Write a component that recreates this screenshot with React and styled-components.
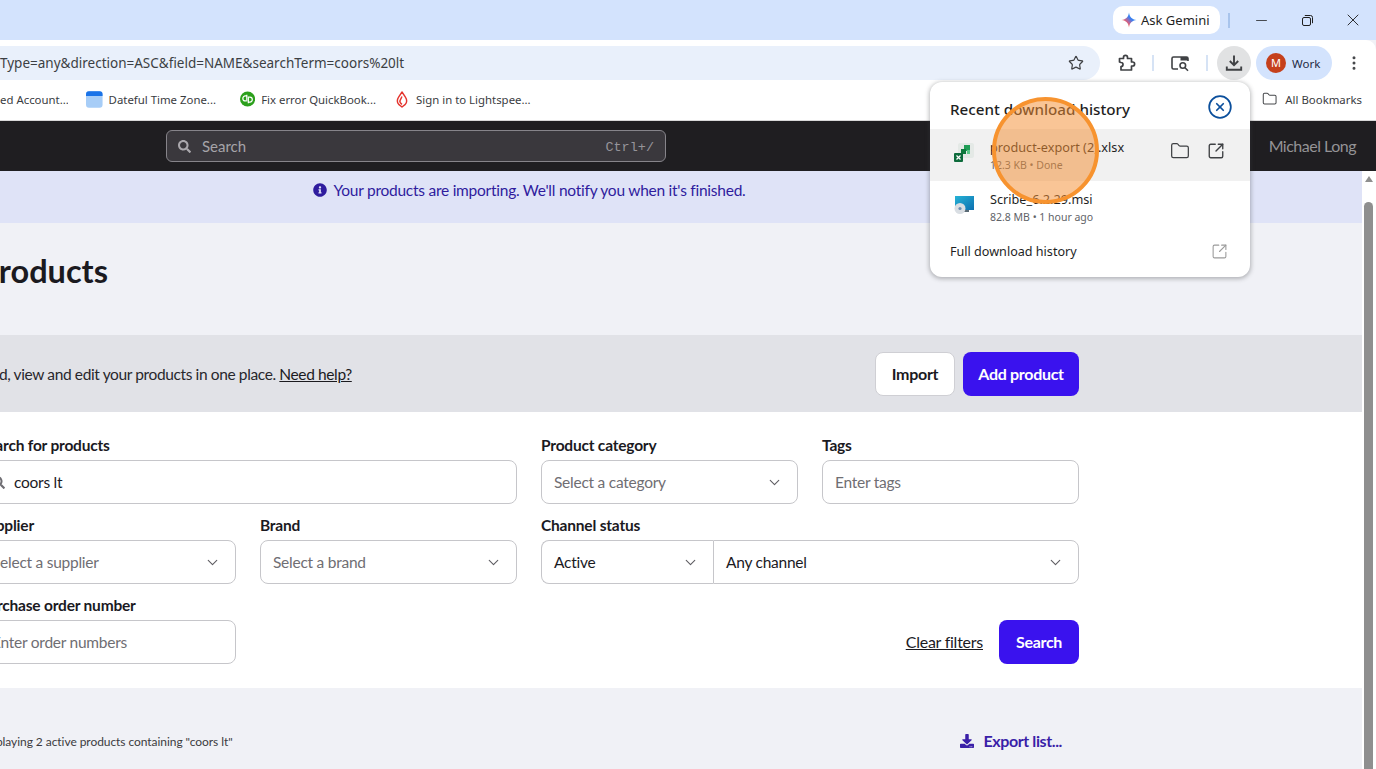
import React from "react";
import styled, { createGlobalStyle } from "styled-components";
import { Star, CircleX, Folder, SquareArrowOutUpRight, ChevronDown, Minus, X, EllipsisVertical } from "lucide-react";
import { FaSearch, FaInfoCircle, FaDownload } from "react-icons/fa";

const Global = createGlobalStyle`
  html, body { margin: 0; padding: 0; overflow: hidden; background: #f0f1f6; }
  * { box-sizing: border-box; }
`;

const chromeFont = `"Noto Sans", "Open Sans", sans-serif`;
const pageFont = `Lato, "Open Sans", sans-serif`;

const Screen = styled.div`
  position: relative;
  width: 1376px;
  height: 769px;
  overflow: hidden;
  display: flex;
  flex-direction: column;
  font-family: ${pageFont};
`;

/* browser chrome */
const TitleBar = styled.div`
  height: 40px;
  flex: none;
  background: #d3e3fd;
  display: flex;
  align-items: center;
  justify-content: flex-end;
`;
const GeminiPill = styled.div`
  height: 28px;
  width: 107px;
  border-radius: 10px;
  background: #fff;
  display: flex;
  align-items: center;
  gap: 4px;
  padding-left: 8px;
  font: 13px ${chromeFont};
  color: #1f1f1f;
`;
const TitleDivider = styled.div`
  width: 2px;
  height: 15px;
  margin: 0 8px;
  background: #a8c4ec;
`;
const WindowButtons = styled.div`
  display: flex;
  width: 138px;
`;
const WindowButton = styled.div`
  width: 46px;
  height: 28px;
  display: flex;
  align-items: center;
  justify-content: center;
  color: #1f1f1f;
`;
const Toolbar = styled.div`
  height: 40px;
  flex: none;
  background: #fff;
  border-top-right-radius: 10px;
  display: flex;
  align-items: center;
  padding-top: 6px;
`;
const AddressBar = styled.div`
  width: 1100px;
  height: 34px;
  flex: none;
  background: #e9f0fb;
  border-radius: 0 17px 17px 0;
  display: flex;
  align-items: center;
  justify-content: space-between;
  padding-right: 16px;
  font: 13.5px ${chromeFont};
  color: #3c3f43;
`;
const ToolIcon = styled.div`
  width: ${p => p.$w || 34}px;
  height: 34px;
  flex: none;
  display: flex;
  align-items: center;
  justify-content: center;
  border-radius: 17px;
  color: #46484b;
  margin-left: ${p => (p.$active ? 9 : 0)}px;
  background: ${p => (p.$active ? "#e1e2e3" : "transparent")};
`;
const ToolDivider = styled.div`
  width: 2px;
  height: 16px;
  flex: none;
  background: #d6e3f5;
`;
const ProfilePill = styled.div`
  width: 76px;
  height: 34px;
  flex: none;
  margin-left: 5px;
  border-radius: 17px;
  background: #d3e3fd;
  display: flex;
  align-items: center;
  gap: 6px;
  padding-left: 10px;
  font: 11.5px ${chromeFont};
  color: #1f2a44;
`;
const Avatar = styled.div`
  width: 20px;
  height: 20px;
  border-radius: 50%;
  background: #c5401c;
  color: #fff;
  font: 11px/20px ${chromeFont};
  text-align: center;
`;
const BookmarkBar = styled.div`
  height: 41px;
  flex: none;
  background: #fff;
  border-bottom: 1px solid #d8d8d8;
  display: flex;
  align-items: center;
  padding: 0 14px 2px 0;
  font: 11.4px ${chromeFont};
  color: #3a3c3f;
`;
const Bookmark = styled.div`
  width: ${p => p.$w}px;
  margin-left: ${p => p.$left || 0}px;
  flex: none;
  display: flex;
  align-items: center;
  gap: ${p => p.$gap || 6}px;
  white-space: nowrap;
  overflow: hidden;
`;
const AllBookmarks = styled(Bookmark)`
  margin-left: auto;
  overflow: visible;
`;

/* app header */
const AppHeader = styled.div`
  height: 50px;
  flex: none;
  background: #1f1e21;
  display: flex;
  align-items: center;
  justify-content: space-between;
  padding: 0 20px 0 166px;
`;
const GlobalSearch = styled.div`
  width: 500px;
  height: 32px;
  background: #3a383d;
  border: 1px solid #86848a;
  border-radius: 6px;
  display: flex;
  align-items: center;
  padding: 0 11px;
  color: #a6a4a9;
  font-size: 15px;
  gap: 11px;
`;
const Shortcut = styled.span`
  margin-left: auto;
  padding-top: 2px;
  font: 13.5px "Liberation Mono", "DejaVu Sans Mono", monospace;
  color: #96949a;
`;
const UserName = styled.div`
  padding-bottom: 2px;
  font-size: 16px;
  letter-spacing: -0.5px;
  font-weight: 400;
  color: #949396;
`;

/* page */
const Viewport = styled.div`
  flex: 1;
  min-height: 0;
  display: flex;
`;
const Main = styled.div`
  width: 1362px;
  flex: none;
  background: #f0f1f6;
  overflow: hidden;
`;
const Scrollbar = styled.div`
  flex: 1;
  background: #fff;
  padding: 5px 3px 0 2px;
  display: flex;
  flex-direction: column;
  align-items: center;
`;
const ScrollArrow = styled.div`
  width: 0;
  height: 0;
  border-left: 4.5px solid transparent;
  border-right: 4.5px solid transparent;
  border-bottom: 6px solid #8f8f8f;
`;
const ScrollThumb = styled.div`
  width: 9px;
  flex: 1;
  margin-top: 20px;
  border-radius: 5px 5px 0 0;
  background: #8f8f8f;
`;
const Column = styled.div`
  width: 1100px;
  margin-left: -21px;
`;
const Banner = styled.div`
  height: 52px;
  background: #dfe3f7;
  color: #2f1c9e;
  font-size: 15.5px;
  letter-spacing: -0.25px;
`;
const BannerText = styled(Column)`
  height: 100%;
  display: flex;
  align-items: center;
  justify-content: center;
  gap: 7px;
  padding-bottom: 14px;
`;
const Heading = styled.h1`
  margin: 0;
  height: 112px;
  padding-top: 27px;
  font-size: 32.5px;
  line-height: 42px;
  font-weight: 700;
  color: #1b1a1f;
`;
const ActionBand = styled.div`
  height: 77px;
  background: #e1e2e7;
`;
const ActionRow = styled(Column)`
  height: 100%;
  display: flex;
  align-items: center;
  justify-content: space-between;
  font-size: 15.5px;
  letter-spacing: -0.38px;
  color: #28272c;
`;
const Link = styled.a`
  color: #1b1a1f;
  text-decoration: underline;
`;
const Buttons = styled.div`
  display: flex;
  align-items: center;
  gap: 8px;
`;
const Button = styled.div`
  height: 44px;
  width: ${p => p.$w}px;
  display: flex;
  align-items: center;
  justify-content: center;
  border-radius: 8px;
  padding-bottom: 1px;
  font-size: 16px;
  letter-spacing: -0.3px;
  font-weight: 700;
  color: ${p => (p.$primary ? "#fff" : "#1b1a1f")};
  background: ${p => (p.$primary ? "#3a12ee" : "#fff")};
  border: ${p => (p.$primary ? "none" : "1px solid #cfcfd4")};
`;
const FilterPanel = styled.div`
  height: 276px;
  background: #fff;
  padding-top: 23px;
`;
const FilterGrid = styled(Column)`
  display: grid;
  grid-template-columns: repeat(4, 257px);
  column-gap: 24px;
  row-gap: 11px;
`;
const Field = styled.div`
  grid-column: span ${p => p.$span || 1};
`;
const Label = styled.div`
  height: 20px;
  margin-bottom: 5px;
  font-size: 15.5px;
  letter-spacing: -0.2px;
  line-height: 20px;
  font-weight: 700;
  color: #1b1a1f;
`;
const Input = styled.div`
  height: 44px;
  border: 1px solid #c6c6ca;
  border-radius: 8px;
  background: #fff;
  display: flex;
  align-items: center;
  gap: 9px;
  padding: 0 12px;
  font-size: 15.5px;
  letter-spacing: -0.25px;
  color: ${p => (p.$filled ? "#1b1a1f" : "#6f6e73")};
`;
const Select = styled(Input)`
  justify-content: space-between;
  padding-right: 14px;
`;
const Chevron = styled(ChevronDown).attrs({ size: 17, strokeWidth: 1.6 })`
  color: #5f5e63;
`;
const SplitSelect = styled.div`
  display: grid;
  grid-template-columns: 172px 1fr;
`;
const LeftSelect = styled(Select)`
  border-radius: 8px 0 0 8px;
  border-right: none;
`;
const RightSelect = styled(Select)`
  border-radius: 0 8px 8px 0;
`;
const FilterActions = styled.div`
  grid-column: span 3;
  align-self: end;
  display: flex;
  align-items: center;
  justify-content: flex-end;
  gap: 16px;
  font-size: 16px;
  letter-spacing: -0.25px;
`;
const ClearLink = styled(Link)`
  padding-bottom: 2px;
`;
const ResultBar = styled(Column)`
  height: 107px;
  display: flex;
  align-items: center;
  justify-content: space-between;
  padding: 0 17px 0 0;
`;
const ResultCount = styled.div`
  font-size: 12px;
  letter-spacing: -0.06px;
  color: #3c3b40;
`;
const ExportLink = styled.div`
  display: flex;
  align-items: center;
  gap: 10px;
  padding-bottom: 2px;
  font-size: 16px;
  letter-spacing: -0.4px;
  font-weight: 700;
  color: #3a1fa8;
`;

/* downloads popup */
const Popup = styled.div`
  position: absolute;
  left: 930px;
  top: 82px;
  width: 320px;
  height: 195px;
  padding-top: 12px;
  background: #fff;
  border-radius: 12px;
  box-shadow: 0 1px 4px 1px rgba(60, 64, 67, 0.35);
  font-family: ${chromeFont};
  color: #1f1f1f;
`;
const PopupHead = styled.div`
  height: 35px;
  padding: 0 17px 6px 20px;
  display: flex;
  align-items: center;
  justify-content: space-between;
  font-size: 15.2px;
  font-weight: 500;
`;
const CloseIcon = styled(CircleX).attrs({ size: 26, strokeWidth: 1.6 })`
  color: #0b4f9c;
  margin-bottom: 3px;
`;
const DownloadRow = styled.div`
  height: 52px;
  display: flex;
  align-items: center;
  padding: 0 25px 0 23px;
  background: ${p => (p.$active ? "#f1f1f1" : "transparent")};
`;
const FileThumb = styled.div`
  width: 22px;
  height: 22px;
  flex: none;
  margin-bottom: 4px;
`;
const FileMeta = styled.div`
  margin-left: 15px;
  padding-top: 2px;
  flex: 1;
`;
const FileName = styled.div`
  margin-bottom: 2px;
  font-size: 12.7px;
  line-height: 17px;
  color: #1f1f1f;
`;
const FileInfo = styled.div`
  font-size: 10.5px;
  line-height: 15px;
  color: #5f6368;
`;
const RowActions = styled.div`
  display: flex;
  align-items: center;
  gap: 17px;
  margin-bottom: 8px;
  color: #3f4144;
`;
const HistoryRow = styled.div`
  height: 36px;
  padding: 0 22px 0 20px;
  display: flex;
  align-items: center;
  justify-content: space-between;
  font-size: 12.6px;
  color: #9a9a9a;
`;
const HistoryLabel = styled.span`
  color: #1f1f1f;
`;
const Spotlight = styled.div`
  position: absolute;
  left: 992px;
  top: 97px;
  width: 107px;
  height: 107px;
  border-radius: 50%;
  border: 4px solid #f7932f;
  background: rgba(243, 144, 53, 0.52);
`;

const GeminiIcon = () => (
  <svg width="16" height="16" viewBox="0 0 16 16">
    <defs>
      <linearGradient id="gem" x1="0" y1="1" x2="1" y2="0">
        <stop offset="0" stopColor="#f4b43c" />
        <stop offset="0.35" stopColor="#e0607a" />
        <stop offset="0.6" stopColor="#3d7df0" />
        <stop offset="1" stopColor="#28b4e8" />
      </linearGradient>
    </defs>
    <path d="M8 0.5C8.6 5 11 7.4 15.5 8C11 8.6 8.6 11 8 15.5C7.4 11 5 8.6 0.5 8C5 7.4 7.4 5 8 0.5Z" fill="url(#gem)" />
  </svg>
);
const RestoreIcon = () => (
  <svg width="11" height="11" viewBox="0 0 11 11" fill="none" stroke="#1f1f1f">
    <rect x="0.5" y="2.5" width="8" height="8" rx="1.5" />
    <path d="M2.8 0.5H8.5A2 2 0 0 1 10.5 2.5V8.2" />
  </svg>
);
const PuzzleIcon = () => (
  <svg width="20" height="20" viewBox="0 0 20 20" fill="none" stroke="#3f4144" strokeWidth="1.7" strokeLinejoin="round">
    <path d="M3.5 5.5H7.5V4.4A2 2 0 0 1 11.5 4.4V5.5H15.5V9H16.6A2 2 0 0 1 16.6 13H15.5V17H5V13.5A1.9 1.9 0 0 0 5 9.5L3.5 9Z" />
  </svg>
);
const TabSearchIcon = () => (
  <svg width="20" height="20" viewBox="0 0 20 20" fill="none" stroke="#3f4144" strokeWidth="1.6">
    <path d="M8 16H3.5A1.5 1.5 0 0 1 2 14.5V5.5A1.5 1.5 0 0 1 3.5 4H16.5A1.5 1.5 0 0 1 18 5.5V8" />
    <rect x="10.5" y="4" width="7.5" height="3.5" fill="#3f4144" stroke="none" />
    <circle cx="12.8" cy="12.5" r="2.8" />
    <path d="M15 14.7L18 17.7" />
  </svg>
);
const DownloadIcon = () => (
  <svg width="20" height="20" viewBox="0 0 20 20" fill="none" stroke="#3f4144" strokeWidth="1.9">
    <path d="M10 2.5V12M5.8 8L10 12.2L14.2 8" />
    <path d="M2.8 13.5V16.8H17.2V13.5" />
  </svg>
);
const DatefulIcon = () => (
  <svg width="17" height="17" viewBox="0 0 17 17">
    <rect width="17" height="17" rx="3" fill="#a7cdf7" />
    <path d="M0 3A3 3 0 0 1 3 0H14A3 3 0 0 1 17 3V5H0Z" fill="#1a73e8" />
  </svg>
);
const QuickBooksIcon = () => (
  <svg width="16" height="16" viewBox="0 0 16 16" fill="none">
    <circle cx="8" cy="8" r="8" fill="#2ca01c" />
    <path d="M7.2 3.6V10.6M7.2 4.8H5.6A2.6 2.6 0 0 0 5.6 10H6.4" stroke="#fff" strokeWidth="1.3" />
    <path d="M8.8 12.4V5.4M8.8 11.2H10.4A2.6 2.6 0 0 0 10.4 6H9.6" stroke="#fff" strokeWidth="1.3" />
  </svg>
);
const FlameIcon = () => (
  <svg width="12" height="17" viewBox="0 0 12 17" fill="none" stroke="#e4342e" strokeWidth="1.4" strokeLinejoin="round">
    <path d="M6 1L2.6 6.2C1 8.7 1 11.4 2.7 13.4L6 16L9.3 13.4C11 11.4 11 8.7 9.4 6.2Z" />
    <path d="M6 5.5L4 9.6C3.5 10.8 4 12 6 13.4" />
  </svg>
);
const ExcelIcon = () => (
  <svg width="22" height="22" viewBox="0 0 22 22">
    <rect x="5" y="1" width="16" height="15" rx="2" fill="#e4e9e6" />
    <rect x="11" y="3" width="6" height="6" fill="#1f9d55" />
    <rect x="8" y="7" width="5" height="5" fill="#0f7a3e" />
    <rect x="14" y="8" width="3" height="4" fill="#5cc98a" />
    <rect x="1" y="11" width="9" height="9" rx="1" fill="#0e6b3c" />
    <path d="M3.5 13.5L7.5 17.5M7.5 13.5L3.5 17.5" stroke="#fff" strokeWidth="1.2" />
  </svg>
);
const InstallerIcon = () => (
  <svg width="22" height="22" viewBox="0 0 22 22">
    <defs>
      <linearGradient id="msi" x1="0" y1="0" x2="1" y2="1">
        <stop offset="0" stopColor="#26b3d6" />
        <stop offset="1" stopColor="#0d6fb0" />
      </linearGradient>
    </defs>
    <rect x="2" y="2" width="19" height="14" fill="url(#msi)" />
    <rect x="8" y="16" width="8" height="2" fill="#5a6a75" />
    <circle cx="7" cy="14.5" r="5.5" fill="#d9dee3" />
    <circle cx="7" cy="14.5" r="1.6" fill="#6b8fb3" />
  </svg>
);

export default function App() {
  return (
    <Screen>
      <Global />
      <TitleBar>
        <GeminiPill>
          <GeminiIcon />
          Ask Gemini
        </GeminiPill>
        <TitleDivider />
        <WindowButtons>
          <WindowButton><Minus size={17} strokeWidth={1.1} /></WindowButton>
          <WindowButton><RestoreIcon /></WindowButton>
          <WindowButton><X size={20} strokeWidth={1.1} /></WindowButton>
        </WindowButtons>
      </TitleBar>
      <Toolbar>
        <AddressBar>
          <span>Type=any&amp;direction=ASC&amp;field=NAME&amp;searchTerm=coors%20lt</span>
          <Star size={16} strokeWidth={1.8} color="#3f4144" />
        </AddressBar>
        <ToolIcon $w={52}><PuzzleIcon /></ToolIcon>
        <ToolDivider />
        <ToolIcon $w={52}><TabSearchIcon /></ToolIcon>
        <ToolDivider />
        <ToolIcon $active><DownloadIcon /></ToolIcon>
        <ProfilePill>
          <Avatar>M</Avatar>
          Work
        </ProfilePill>
        <ToolIcon $w={44}><EllipsisVertical size={18} strokeWidth={2} /></ToolIcon>
      </Toolbar>
      <BookmarkBar>
        <Bookmark $w={68}>ed Account...</Bookmark>
        <Bookmark $w={130} $left={18}><DatefulIcon />Dateful Time Zone...</Bookmark>
        <Bookmark $w={136} $left={24}><QuickBooksIcon />Fix error QuickBook...</Bookmark>
        <Bookmark $w={140} $left={20} $gap={8}><FlameIcon />Sign in to Lightspee...</Bookmark>
        <AllBookmarks $w={100} $gap={8}><Folder size={16} strokeWidth={1.6} color="#46484b" />All Bookmarks</AllBookmarks>
      </BookmarkBar>
      <AppHeader>
        <GlobalSearch>
          <FaSearch size={13} color="#aaa8ad" />
          Search
          <Shortcut>Ctrl+/</Shortcut>
        </GlobalSearch>
        <UserName>Michael Long</UserName>
      </AppHeader>
      <Viewport>
        <Main>
          <Banner>
            <BannerText>
              <FaInfoCircle size={14} />
              Your products are importing. We'll notify you when it's finished.
            </BannerText>
          </Banner>
          <Column>
            <Heading>Products</Heading>
          </Column>
          <ActionBand>
            <ActionRow>
              <span>Find, view and edit your products in one place. <Link>Need help?</Link></span>
              <Buttons>
                <Button $w={80}>Import</Button>
                <Button $primary $w={116}>Add product</Button>
              </Buttons>
            </ActionRow>
          </ActionBand>
          <FilterPanel>
            <FilterGrid>
              <Field $span={2}>
                <Label>Search for products</Label>
                <Input $filled>
                  <FaSearch size={13} color="#6f6e73" />
                  coors lt
                </Input>
              </Field>
              <Field>
                <Label>Product category</Label>
                <Select>Select a category<Chevron /></Select>
              </Field>
              <Field>
                <Label>Tags</Label>
                <Input>Enter tags</Input>
              </Field>
              <Field>
                <Label>Supplier</Label>
                <Select>Select a supplier<Chevron /></Select>
              </Field>
              <Field>
                <Label>Brand</Label>
                <Select>Select a brand<Chevron /></Select>
              </Field>
              <Field $span={2}>
                <Label>Channel status</Label>
                <SplitSelect>
                  <LeftSelect $filled>Active<Chevron /></LeftSelect>
                  <RightSelect $filled>Any channel<Chevron /></RightSelect>
                </SplitSelect>
              </Field>
              <Field>
                <Label>Purchase order number</Label>
                <Input>Enter order numbers</Input>
              </Field>
              <FilterActions>
                <ClearLink>Clear filters</ClearLink>
                <Button $primary $w={80}>Search</Button>
              </FilterActions>
            </FilterGrid>
          </FilterPanel>
          <ResultBar>
            <ResultCount>Displaying 2 active products containing "coors lt"</ResultCount>
            <ExportLink><FaDownload size={14} />Export list...</ExportLink>
          </ResultBar>
        </Main>
        <Scrollbar>
          <ScrollArrow />
          <ScrollThumb />
        </Scrollbar>
      </Viewport>
      <Popup>
        <PopupHead>
          Recent download history
          <CloseIcon />
        </PopupHead>
        <DownloadRow $active>
          <FileThumb><ExcelIcon /></FileThumb>
          <FileMeta>
            <FileName>product-export (2).xlsx</FileName>
            <FileInfo>12.3 KB • Done</FileInfo>
          </FileMeta>
          <RowActions>
            <Folder size={20} strokeWidth={1.5} />
            <SquareArrowOutUpRight size={18} strokeWidth={1.8} />
          </RowActions>
        </DownloadRow>
        <DownloadRow>
          <FileThumb><InstallerIcon /></FileThumb>
          <FileMeta>
            <FileName>Scribe_6.2.29.msi</FileName>
            <FileInfo>82.8 MB • 1 hour ago</FileInfo>
          </FileMeta>
        </DownloadRow>
        <HistoryRow>
          <HistoryLabel>Full download history</HistoryLabel>
          <SquareArrowOutUpRight size={17} strokeWidth={1.5} />
        </HistoryRow>
      </Popup>
      <Spotlight />
    </Screen>
  );
}
